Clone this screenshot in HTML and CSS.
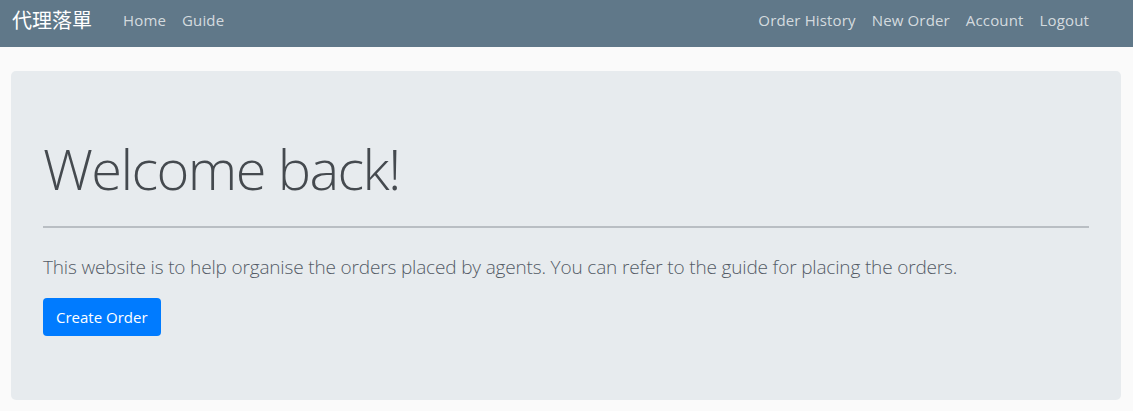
FILE: index.html
```html
<!DOCTYPE html>
<html lang="en">
<head>
<meta charset="utf-8">
<title>代理落單</title>
<link rel="stylesheet" href="styles.css">
</head>
<body>
<nav class="navbar">
  <a class="brand" href="#">代理落單</a>
  <ul class="nav nav-left">
    <li><a class="nav-link" href="#">Home</a></li>
    <li><a class="nav-link" href="#">Guide</a></li>
  </ul>
  <ul class="nav nav-right">
    <li><a class="nav-link" href="#">Order History</a></li>
    <li><a class="nav-link" href="#">New Order</a></li>
    <li><a class="nav-link" href="#">Account</a></li>
    <li><a class="nav-link" href="#">Logout</a></li>
  </ul>
</nav>
<main class="container">
  <section class="jumbotron">
    <h1 class="display">Welcome back!</h1>
    <hr class="divider">
    <p class="lead">This website is to help organise the orders placed by agents. You can refer to the guide for placing the orders.</p>
    <a class="btn" href="#">Create Order</a>
  </section>
</main>
</body>
</html>
```
FILE: styles.css
```css
* { box-sizing: border-box; }
html, body { margin: 0; padding: 0; }
body {
  background: #fafafa;
  font-family: "Open Sans", "Noto Sans CJK TC", sans-serif;
  font-size: 16px;
  line-height: 1.5;
  color: #212529;
}
.navbar {
  display: flex;
  align-items: center;
  height: 47px;
  background: #607889;
  padding: 0 36px 7px 12px;
}
.brand {
  font-family: "Noto Sans CJK TC", sans-serif;
  font-size: 20px;
  line-height: 30px;
  color: #fff;
  text-decoration: none;
  margin-right: 23px;
}
.nav {
  display: flex;
  list-style: none;
  margin: 0;
  padding: 0;
}
.nav-right { margin-left: auto; }
.nav-link {
  display: block;
  padding: 0 8px;
  font-size: 15px;
  letter-spacing: 0.15px;
  color: rgba(255,255,255,0.74);
  text-decoration: none;
}
.container {
  padding: 24px 12px 0 11px;
}
.jumbotron {
  background: #e7ebee;
  border-radius: 5px;
  padding: 64px 32px;
}
.display {
  margin: 0;
  font-size: 56px;
  font-weight: 300;
  line-height: 67px;
  color: #454a4f;
  letter-spacing: -1.6px;
}
.divider {
  margin: 24px 0 24px;
  border: 0;
  border-top: 2px solid #b9bec3;
}
.lead {
  margin: 0 0 16px;
  font-size: 19px;
  font-weight: 300;
  line-height: 30px;
  color: #545b66;
  letter-spacing: -0.16px;
}
.btn {
  display: inline-block;
  background: #007bff;
  color: #fff;
  text-decoration: none;
  border-radius: 4px;
  padding: 7px 13px;
  font-size: 15px;
  line-height: 24px;
}
```
